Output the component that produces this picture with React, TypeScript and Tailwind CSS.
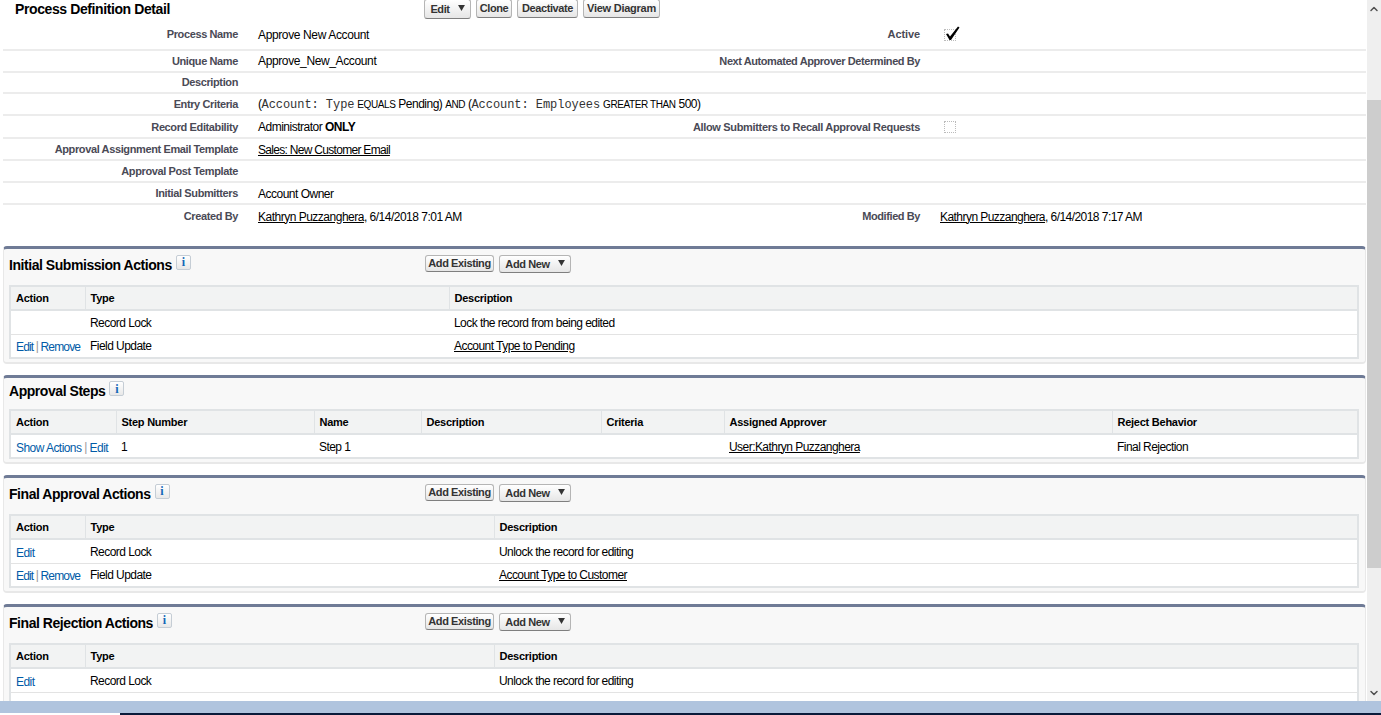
import { ChevronDown, ChevronUp } from "lucide-react";

function Arrow() {
  return (
    <svg width="7" height="6" viewBox="0 0 8 7" className="ml-[8px] mt-[-2px] inline-block">
      <path d="M0 0h8L4 7z" fill="#333" />
    </svg>
  );
}

function Btn({ children, menu, className = "" }: { children: React.ReactNode; menu?: boolean; className?: string }) {
  return (
    <button
      type="button"
      className={`flex items-center justify-center whitespace-nowrap rounded-[3px] border border-[#b5b5b5] border-b-[#7f7f7f] bg-gradient-to-b from-white to-[#e6e6e6] text-[11px] font-bold leading-none tracking-[-0.4px] text-[#333] ${className}`}
    >
      {children}
      {menu && <Arrow />}
    </button>
  );
}

function Row({
  label,
  value,
  label2,
  value2,
  h,
  last,
}: {
  label: string;
  value?: React.ReactNode;
  label2?: React.ReactNode;
  value2?: React.ReactNode;
  h: string;
  last?: boolean;
}) {
  return (
    <div className={`flex items-center ${h} ${last ? "" : "border-b-2 border-[#ececec]"}`}>
      <div className="w-[235px] text-right text-[11px] font-bold tracking-[-0.38px] text-[#4a4a56]">{label}</div>
      <div className="w-[427px] whitespace-nowrap pl-[20px] text-[12px] tracking-[-0.5px] text-black">{value}</div>
      <div className="w-[255px] whitespace-nowrap text-right text-[11px] font-bold tracking-[-0.42px] text-[#4a4a56]">{label2}</div>
      <div className="flex-1 whitespace-nowrap pl-[20px] text-[12px] tracking-[-0.55px] text-black">{value2}</div>
    </div>
  );
}

function Info() {
  return (
    <span className="ml-[4px] mt-[-6px] flex h-[15px] w-[15px] items-center justify-center rounded-[2px] border border-[#c5cdd5] bg-gradient-to-b from-white to-[#e8e8e8] font-['Liberation_Serif',serif] text-[12px] font-bold leading-none text-[#1468b8]">
      i
    </span>
  );
}

function Link({ children }: { children: React.ReactNode }) {
  return <span className="underline">{children}</span>;
}

function Act({ children }: { children: React.ReactNode }) {
  return <span className="inline-block translate-y-px text-[#015ba7]">{children}</span>;
}

function Sep() {
  return <span className="text-[#999]"> | </span>;
}

function EditRemove() {
  return (
    <span className="tracking-[-0.85px]">
      <Act>Edit</Act>
      <Sep />
      <Act>Remove</Act>
    </span>
  );
}

type Cell = React.ReactNode;

function Table({ widths, head, rows }: { widths: string[]; head: string[]; rows: Cell[][] }) {
  return (
    <table className="ml-[5px] w-[1350px] table-fixed border-collapse border-2 border-[#e0e3e5] bg-white">
      <colgroup>
        {widths.map((w, i) => (
          <col key={i} className={w} />
        ))}
      </colgroup>
      <thead>
        <tr className="h-[24px] border-b-2 border-[#e0e3e5] bg-[#f2f3f3]">
          {head.map((t, i) => (
            <th key={t} className={`px-[5px] text-left text-[11px] font-bold tracking-[-0.25px] text-black ${i > 0 ? "border-l border-[#e0e3e5]" : ""}`}>
              {t}
            </th>
          ))}
        </tr>
      </thead>
      <tbody>
        {rows.map((r, i) => (
          <tr key={i} className="h-[24px] border-b border-[#e3e3e3] last:border-b-0">
            {r.map((c, j) => (
              <td key={j} className="whitespace-nowrap px-[5px] pt-[1px] text-[12px] tracking-[-0.55px] text-black">
                {c}
              </td>
            ))}
          </tr>
        ))}
      </tbody>
    </table>
  );
}

function Section({
  title,
  buttons = true,
  className = "",
  headH,
  children,
}: {
  title: string;
  buttons?: boolean;
  className?: string;
  headH: string;
  children: React.ReactNode;
}) {
  return (
    <section className={`ml-[3px] mr-[1px] rounded-[4px] border-x border-b-2 border-t-[3px] border-x-[#e8e8e8] border-b-[#e8e8e8] border-t-[#6f7b96] bg-[#f8f8f8] ${className}`}>
      <div className={`relative flex items-center pb-[4px] pl-[5px] ${headH}`}>
        <h2 className="text-[14px] font-bold tracking-[-0.45px] text-black">{title}</h2>
        <Info />
        {buttons && (
          <div className="absolute left-[421px] top-[6px] flex items-start gap-[5px]">
            <Btn className="h-[17px] w-[69px]">Add Existing</Btn>
            <Btn menu className="h-[18px] w-[72px]">Add New</Btn>
          </div>
        )}
      </div>
      {children}
    </section>
  );
}

export default function App() {
  return (
    <div className="flex h-[715px] w-[1381px] flex-col overflow-hidden bg-white font-['Liberation_Sans',Arial,sans-serif]">
      <div className="flex h-[701px] min-h-0">
        <main className="w-[1367px] overflow-hidden">
          <div className="relative flex h-[24px] items-start pl-[15px] pt-[1px]">
            <h1 className="text-[14px] font-bold leading-[16px] tracking-[-0.4px] text-black">Process Definition Detail</h1>
            <div className="absolute left-[424px] top-[-1px] flex items-start gap-[5px]">
              <Btn menu className="h-[20px] w-[47px]">Edit</Btn>
              <Btn className="h-[19px] w-[36px]">Clone</Btn>
              <Btn className="h-[19px] w-[61px]">Deactivate</Btn>
              <Btn className="h-[19px] w-[77px] tracking-[-0.25px]">View Diagram</Btn>
            </div>
          </div>

          <div className="ml-[3px] mr-[1px]">
            <Row
              h="h-[27px] pb-[4px]"
              label="Process Name"
              value={<span className="tracking-[-0.37px]">Approve New Account</span>}
              label2={<span className="tracking-[-0.1px]">Active</span>}
              value2={
                <span className="relative ml-[4px] block h-[12px] w-[12px] border border-dotted border-[#bbb]">
                  <svg width="15" height="15" viewBox="0 0 15 15" className="absolute left-0 top-[-4px]">
                    <path d="M1 8 L3 7.5 L5 10.5 L13 0.5 L14.5 1.5 L6 14 L4.5 14 Z" fill="#000" />
                  </svg>
                </span>
              }
            />
            <Row h="h-[22px]" label="Unique Name" value={<span className="tracking-[-0.37px]">Approve_New_Account</span>} label2="Next Automated Approver Determined By" />
            <Row h="h-[21px]" label="Description" />
            <Row
              h="h-[22px]"
              label="Entry Criteria"
              value={
                <>
                  (<span className="font-['Liberation_Mono',monospace] tracking-[-0.05px] text-[#333]">Account: Type</span> <span className="text-[10px] tracking-[-0.4px]">EQUALS</span> Pending) <span className="text-[10px] tracking-[-0.4px]">AND</span> (<span className="font-['Liberation_Mono',monospace] tracking-[-0.05px] text-[#333]">Account: Employees</span> <span className="text-[10px] tracking-[-0.4px]">GREATER THAN</span> 500)
                </>
              }
            />
            <Row
              h="h-[23px] pt-[1px]"
              label="Record Editability"
              value={
                <>
                  Administrator <b>ONLY</b>
                </>
              }
              label2={<span className="tracking-[-0.33px]">Allow Submitters to Recall Approval Requests</span>}
              value2={<span className="ml-[4px] block h-[12px] w-[12px] border border-dotted border-[#bbb]" />}
            />
            <Row h="h-[22px] pt-[1px]" label="Approval Assignment Email Template" value={<span className="tracking-[-0.7px]"><Link>Sales: New Customer Email</Link></span>} />
            <Row h="h-[22px] pt-[1px]" label="Approval Post Template" />
            <Row h="h-[22px] pt-[1px]" label="Initial Submitters" value="Account Owner" />
            <Row
              h="h-[23px]"
              last
              label="Created By"
              value={
                <>
                  <Link>Kathryn Puzzanghera</Link>, 6/14/2018 7:01 AM
                </>
              }
              label2="Modified By"
              value2={
                <>
                  <Link>Kathryn Puzzanghera</Link>, 6/14/2018 7:17 AM
                </>
              }
            />
          </div>

          <Section title="Initial Submission Actions" className="mt-[18px] h-[118px]" headH="h-[36px]">
            <Table
              widths={["w-[75px]", "w-[364px]", "w-auto"]}
              head={["Action", "Type", "Description"]}
              rows={[
                ["", "Record Lock", "Lock the record from being edited"],
                [<EditRemove />, "Field Update", <Link>Account Type to Pending</Link>],
              ]}
            />
          </Section>

          <Section title="Approval Steps" buttons={false} className="mt-[11px] h-[89px]" headH="h-[31px]">
            <Table
              widths={["w-[106px]", "w-[198px]", "w-[107px]", "w-[180px]", "w-[123px]", "w-[388px]", "w-auto"]}
              head={["Action", "Step Number", "Name", "Description", "Criteria", "Assigned Approver", "Reject Behavior"]}
              rows={[
                [
                  <>
                    <Act>Show Actions</Act>
                    <Sep />
                    <Act>Edit</Act>
                  </>,
                  "1",
                  "Step 1",
                  "",
                  "",
                  <Link>User:Kathryn Puzzanghera</Link>,
                  "Final Rejection",
                ],
              ]}
            />
          </Section>

          <Section title="Final Approval Actions" className="mt-[11px] h-[118px]" headH="h-[36px]">
            <Table
              widths={["w-[75px]", "w-[409px]", "w-auto"]}
              head={["Action", "Type", "Description"]}
              rows={[
                [<Act>Edit</Act>, "Record Lock", "Unlock the record for editing"],
                [<EditRemove />, "Field Update", <Link>Account Type to Customer</Link>],
              ]}
            />
          </Section>

          <Section title="Final Rejection Actions" className="mt-[11px] h-[118px]" headH="h-[36px]">
            <Table
              widths={["w-[75px]", "w-[409px]", "w-auto"]}
              head={["Action", "Type", "Description"]}
              rows={[
                [<Act>Edit</Act>, "Record Lock", "Unlock the record for editing"],
                ["", "", ""],
              ]}
            />
          </Section>
        </main>

        <div className="flex w-[14px] flex-col bg-[#efefef]">
          <div className="flex h-[17px] items-center justify-center">
            <ChevronUp size={12} strokeWidth={3} className="text-[#505050]" />
          </div>
          <div className="mt-[83px] h-[468px] bg-[#cdcdcd]" />
          <div className="mt-auto flex h-[17px] items-center justify-center">
            <ChevronDown size={12} strokeWidth={3} className="text-[#505050]" />
          </div>
        </div>
      </div>

      <div className="h-[12px] bg-[#b0c4de]" />
      <div className="flex h-[2px]">
        <div className="w-[120px] bg-white" />
        <div className="flex-1 bg-[#0a1a3a]" />
      </div>
    </div>
  );
}
